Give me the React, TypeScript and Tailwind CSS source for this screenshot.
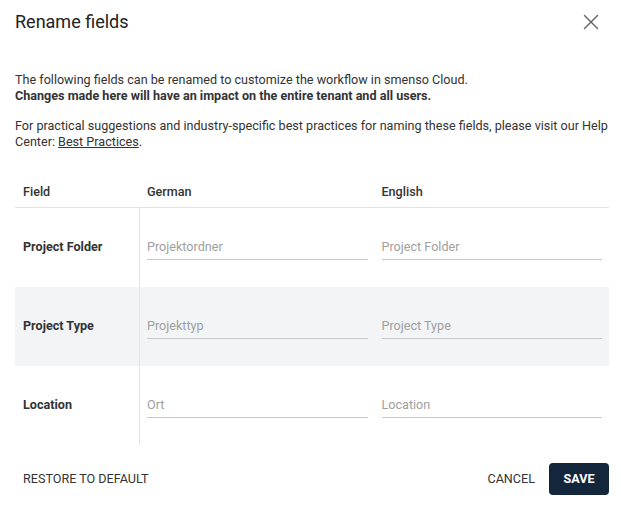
import { X } from 'lucide-react';

const rows = [
  { label: 'Project Folder', de: 'Projektordner', en: 'Project Folder' },
  { label: 'Project Type', de: 'Projekttyp', en: 'Project Type' },
  { label: 'Location', de: 'Ort', en: 'Location' },
];

function FieldInput({ placeholder }: { placeholder: string }) {
  return (
    <div className="flex h-[24px] items-start border-b border-[#c8c8c8]">
      <input
        className="w-full bg-transparent text-[12.6px] leading-[21px] text-[#333] outline-none placeholder:text-[#a0a0a0]"
        placeholder={placeholder}
      />
    </div>
  );
}

export default function App() {
  return (
    <div
      className="flex h-[511px] w-[621px] flex-col bg-white pl-[15px] pr-[12px] text-[#333]"
      style={{ fontFamily: 'Roboto, "Liberation Sans", sans-serif' }}
    >
      <header className="flex items-center justify-between pt-[9px]">
        <h2 className="text-[18px] leading-6 text-[#222]">Rename fields</h2>
        <button className="mr-[5px] text-[#666]">
          <X className="h-[26px] w-[26px]" strokeWidth={1.3} />
        </button>
      </header>

      <div className="mt-[37px] text-[12.6px] leading-4">
        <p>
          The following fields can be renamed to customize the workflow in smenso Cloud.
          <br />
          <span className="font-bold">Changes made here will have an impact on the entire tenant and all users.</span>
        </p>
        <p className="mt-[14px]">
          For practical suggestions and industry-specific best practices for naming these fields, please visit our Help
          Center: <a className="underline">Best Practices</a>.
        </p>
      </div>

      <div className="mt-[28px]">
        <div className="flex h-[30px] items-center border-b border-[#e3e3e3] text-[12.6px] font-medium">
          <div className="w-[125px] pl-[8px]">Field</div>
          <div className="flex-1 px-[7px]">German</div>
          <div className="flex-1 px-[7px]">English</div>
        </div>
        {rows.map((r, i) => (
          <div key={r.label} className={`flex h-[79px] ${i === 1 ? 'bg-[#f3f4f6]' : ''}`}>
            <div className="flex w-[125px] items-center border-r border-[#e3e3e3] pl-[8px] text-[12.6px] font-bold">
              {r.label}
            </div>
            <div className="flex flex-1 items-center px-[7px]">
              <div className="flex-1">
                <FieldInput placeholder={r.de} />
              </div>
            </div>
            <div className="flex flex-1 items-center px-[7px]">
              <div className="flex-1">
                <FieldInput placeholder={r.en} />
              </div>
            </div>
          </div>
        ))}
      </div>

      <footer className="mt-[18px] flex items-center justify-between">
        <button className="pl-[8px] text-[12.6px] uppercase text-[#333]">Restore to default</button>
        <div className="flex items-center gap-[14px]">
          <button className="text-[12.6px] uppercase text-[#333]">Cancel</button>
          <button className="h-[32px] w-[60px] rounded-[4px] bg-[#13263b] text-[12.6px] font-bold uppercase text-white">
            Save
          </button>
        </div>
      </footer>
    </div>
  );
}
